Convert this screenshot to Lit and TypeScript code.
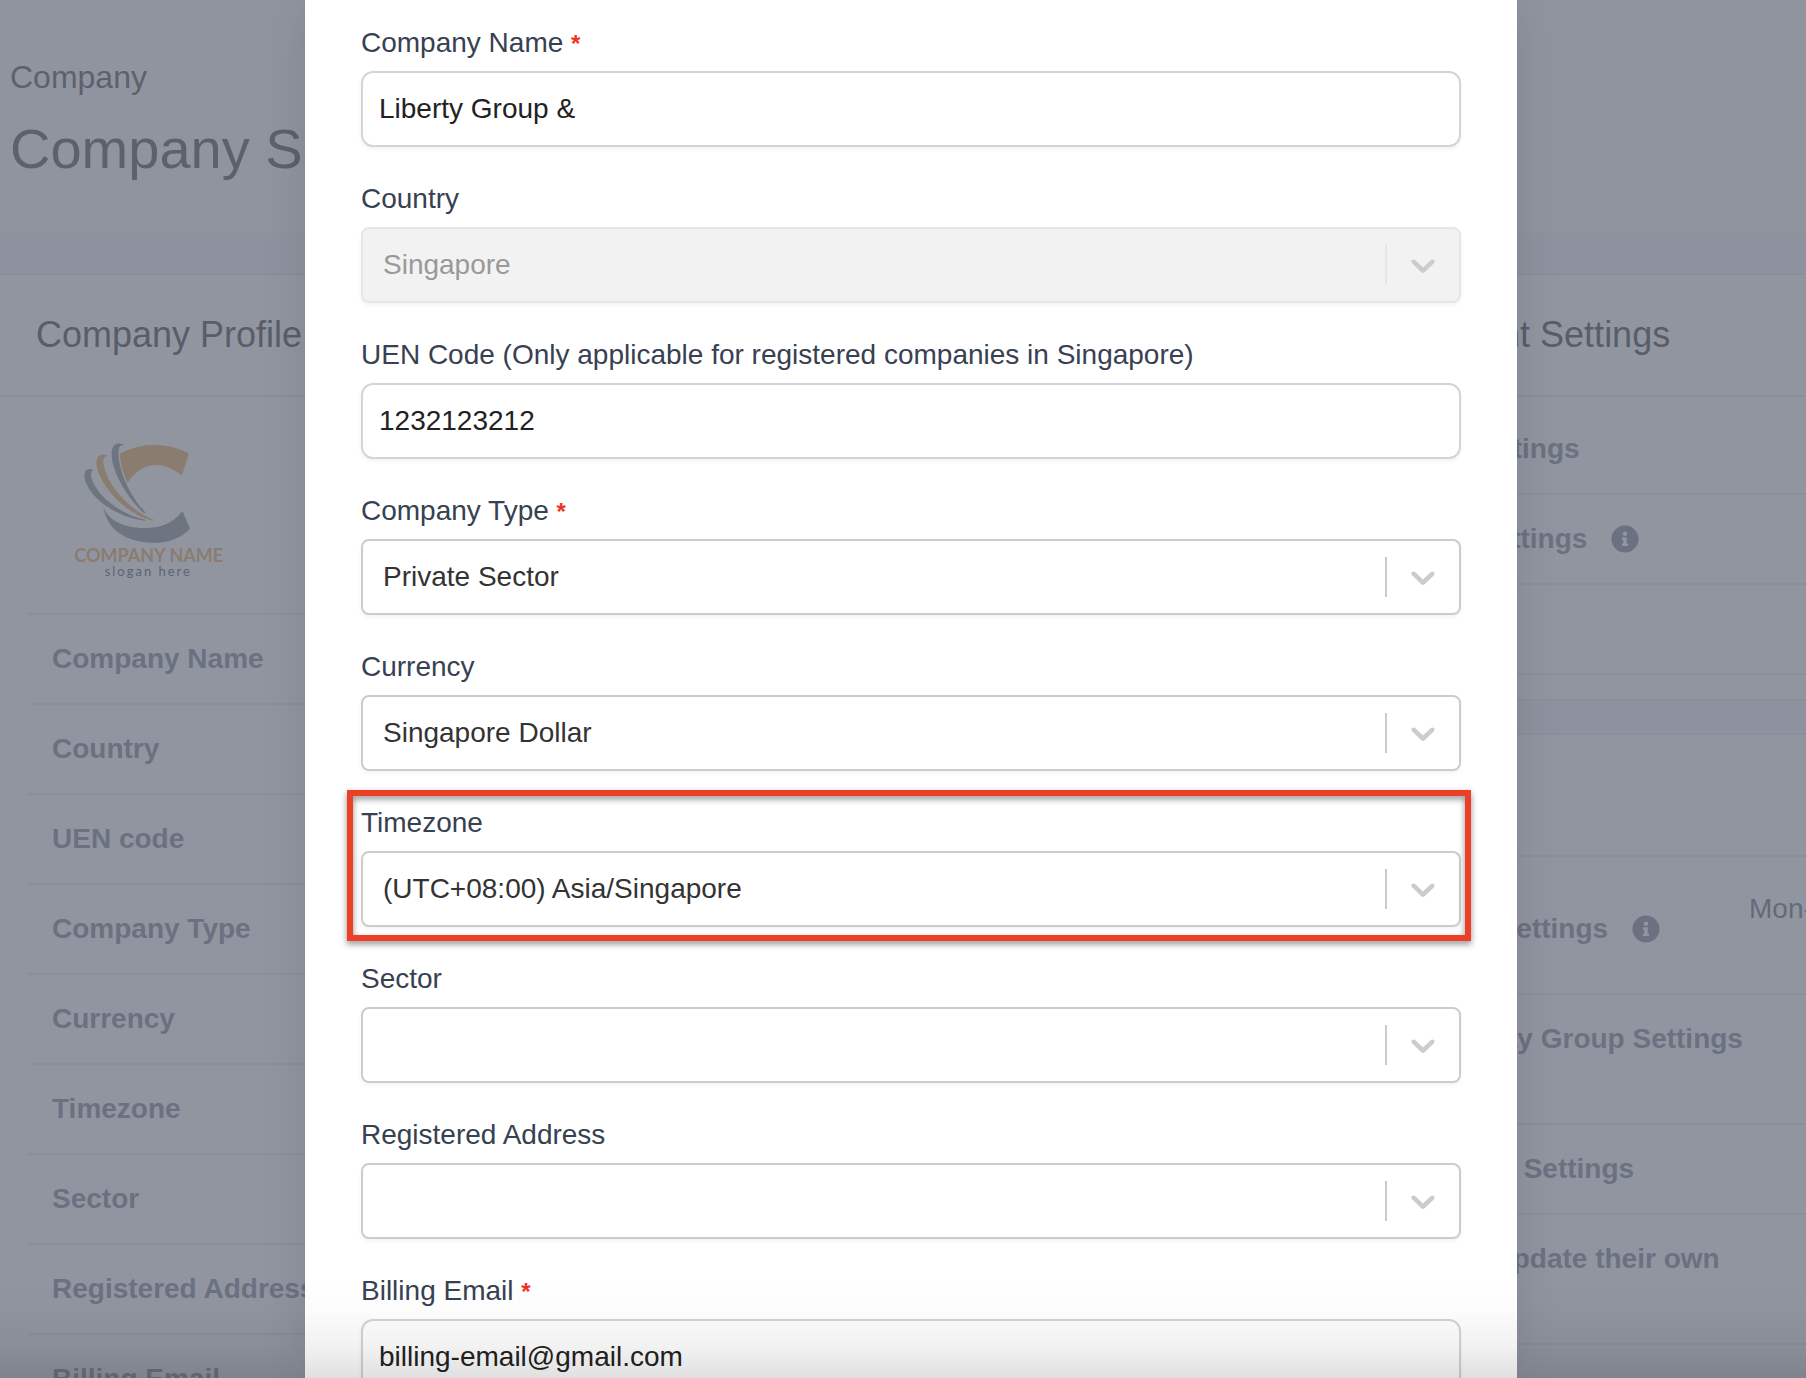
import { LitElement, html, css, nothing } from "lit";
import { customElement, property } from "lit/decorators.js";

interface Field {
  id: string;
  label: string;
  kind: "text" | "email" | "select";
  value: string;
  required?: boolean;
  disabled?: boolean;
  marked?: boolean;
}

interface Setting {
  label: string;
  info?: boolean;
  value?: string;
}

const FIELDS: Field[] = [
  { id: "company-name", label: "Company Name", kind: "text", value: "Liberty Group &", required: true },
  { id: "country", label: "Country", kind: "select", value: "Singapore", disabled: true },
  { id: "uen", label: "UEN Code (Only applicable for registered companies in Singapore)", kind: "text", value: "1232123212" },
  { id: "company-type", label: "Company Type", kind: "select", value: "Private Sector", required: true },
  { id: "currency", label: "Currency", kind: "select", value: "Singapore Dollar" },
  { id: "timezone", label: "Timezone", kind: "select", value: "(UTC+08:00) Asia/Singapore", marked: true },
  { id: "sector", label: "Sector", kind: "select", value: "" },
  { id: "address", label: "Registered Address", kind: "select", value: "" },
  { id: "billing-email", label: "Billing Email", kind: "email", value: "billing-email@gmail.com", required: true },
];

const PROFILE: Setting[] = [
  "Company Name",
  "Country",
  "UEN code",
  "Company Type",
  "Currency",
  "Timezone",
  "Sector",
  "Registered Address",
  "Billing Email",
].map((label) => ({ label }));

const GENERAL: Setting[] = [
  { label: "Approval Settings" },
  { label: "Reminder Settings", info: true },
  { label: "" },
];

const WORK: Setting[] = [
  { label: "Work Week Settings", info: true, value: "Mon-Fri" },
  { label: "Public Holiday Group Settings Calendar" },
  { label: "Payroll Cycle Settings" },
  { label: "Employees update their own profile" },
  { label: "" },
];

@customElement("form-field")
class FormField extends LitElement {
  @property({ attribute: false }) field!: Field;

  static styles = css`
    :host {
      display: block;
      position: relative;
    }
    .label {
      display: block;
      margin-bottom: 8px;
      font-size: 28px;
      line-height: 40px;
      color: #374151;
    }
    .star {
      font-size: 24px;
      font-weight: 700;
      line-height: 1;
      color: #f0321e;
    }
    .input,
    .select {
      box-sizing: border-box;
      width: 100%;
      margin: 0;
      font: inherit;
      font-size: 28px;
      line-height: 40px;
      outline: none;
    }
    .input {
      display: block;
      height: 76px;
      padding: 0 16px;
      border: 2px solid #d1d5db;
      border-radius: 12px;
      background: #fff;
      color: #222;
      box-shadow: 0 2px 4px rgba(0, 0, 0, 0.05);
    }
    .control {
      display: grid;
      box-sizing: border-box;
      height: 76px;
      border: 2px solid #ccc;
      border-radius: 8px;
      background: #fff;
      box-shadow: 0 2px 4px rgba(0, 0, 0, 0.05);
    }
    .select {
      grid-area: 1 / 1;
      appearance: none;
      padding: 0 84px 0 20px;
      border: 0;
      background: transparent;
      color: #333;
      opacity: 1;
    }
    .indicators {
      grid-area: 1 / 1;
      justify-self: end;
      display: flex;
      align-items: center;
      color: #ccc;
      pointer-events: none;
    }
    .separator {
      width: 2px;
      height: 40px;
      background: #ccc;
    }
    .chevron {
      display: block;
      width: 40px;
      height: 40px;
      padding: 0 16px;
      fill: currentColor;
    }
    .disabled {
      border-color: #e6e6e6;
      background: #f2f2f2;
    }
    .disabled .select {
      color: #999;
    }
    .disabled .separator {
      background: #e6e6e6;
    }
    .mark {
      position: absolute;
      inset: -13px -10px -14px -14px;
      border: 6px solid #eb4026;
      filter: drop-shadow(0 3px 3px rgba(0, 0, 0, 0.45));
      pointer-events: none;
    }
  `;

  render() {
    const f = this.field;
    return html`
      <label class="label" for=${f.id}
        >${f.label}${f.required ? html` <span class="star">*</span>` : nothing}</label
      >
      ${f.kind === "select"
        ? html`<div class="control ${f.disabled ? "disabled" : ""}">
            <select class="select" id=${f.id} ?disabled=${f.disabled}>
              <option>${f.value}</option>
            </select>
            <div class="indicators">
              <span class="separator"></span>
              <svg class="chevron" viewBox="0 0 20 20" aria-hidden="true">
                <path
                  d="M4.516 7.548c0.436-0.446 1.043-0.481 1.576 0l3.908 3.747 3.908-3.747c0.533-0.481 1.141-0.446 1.574 0 0.436 0.445 0.408 1.197 0 1.615-0.406 0.418-4.695 4.502-4.695 4.502-0.217 0.223-0.502 0.335-0.787 0.335s-0.57-0.112-0.789-0.335c0 0-4.287-4.084-4.695-4.502s-0.436-1.17 0-1.615z"
                />
              </svg>
            </div>
          </div>`
        : html`<input class="input" id=${f.id} type=${f.kind} .value=${f.value} />`}
      ${f.marked ? html`<div class="mark"></div>` : nothing}
    `;
  }
}

@customElement("settings-card")
class SettingsCard extends LitElement {
  @property() heading = "";
  @property({ attribute: false }) rows: Setting[] = [];

  static styles = css`
    :host {
      display: block;
      border-top: 2px solid #e5e7eb;
      border-bottom: 2px solid #e5e7eb;
      background: #fff;
    }
    .heading {
      margin: 0;
      padding: 36px;
      border-bottom: 2px solid #e5e7eb;
      font-size: 36px;
      line-height: 48px;
      font-weight: 400;
      color: #222;
      white-space: nowrap;
    }
    .body {
      padding: 8px 0 24px 28px;
    }
    .list {
      margin: 0;
    }
    .row {
      display: flex;
      align-items: center;
      min-height: 40px;
      padding: 24px 0 24px 24px;
      border-bottom: 2px solid #e5e7eb;
      font-size: 28px;
      line-height: 40px;
      color: #6b7280;
    }
    .term {
      display: flex;
      align-items: center;
      gap: 24px;
      flex: 0 0 409px;
      font-weight: 700;
    }
    .info {
      width: 28px;
      height: 28px;
      fill: currentColor;
    }
    .value {
      margin: 0;
      padding-bottom: 40px;
      color: #4b5563;
      white-space: nowrap;
    }
  `;

  render() {
    return html`
      <h2 class="heading">${this.heading}</h2>
      <div class="body">
        <slot></slot>
        <dl class="list">
          ${this.rows.map(
            (r) => html`<div class="row">
              <dt class="term">
                <span>${r.label}</span>
                ${r.info
                  ? html`<svg class="info" viewBox="0 0 512 512" aria-hidden="true">
                      <path
                        d="M256 8C119 8 8 119 8 256s111 248 248 248 248-111 248-248S393 8 256 8zm0 110c23.200 0 42 18.800 42 42s-18.800 42-42 42-42-18.800-42-42 18.800-42 42-42zm56 254c0 6.600-5.400 12-12 12h-88c-6.600 0-12-5.400-12-12v-24c0-6.600 5.400-12 12-12h12v-64h-12c-6.600 0-12-5.400-12-12v-24c0-6.600 5.400-12 12-12h64c6.600 0 12 5.400 12 12v100h12c6.600 0 12 5.400 12 12v24z"
                      />
                    </svg>`
                  : nothing}
              </dt>
              ${r.value ? html`<dd class="value">${r.value}</dd>` : nothing}
            </div>`
          )}
        </dl>
      </div>
    `;
  }
}

@customElement("app-root")
class AppRoot extends LitElement {
  static styles = css`
    :host {
      display: block;
      font-family: "Liberation Sans", Arial, Helvetica, sans-serif;
    }
    .shell {
      position: relative;
      height: 100vh;
      overflow: hidden;
      background: #f3f4f6;
    }
    .masthead {
      padding: 57px 10px 48px;
      background: #f9fafb;
      color: #333;
    }
    .crumb {
      margin: 0 0 16px;
      font-size: 32px;
      line-height: 40px;
    }
    .title {
      margin: 0;
      font-size: 56px;
      line-height: 72px;
      font-weight: 400;
    }
    .cards {
      display: grid;
      grid-template-columns: minmax(0, 1fr) 518px;
      align-items: start;
      gap: 32px;
      margin-top: 40px;
    }
    .stack {
      display: grid;
      gap: 32px;
    }
    .brand {
      padding: 35px 0 33px 45px;
      border-bottom: 2px solid #e5e7eb;
    }
    .logo {
      display: block;
      width: 154px;
      height: 140px;
    }
    .orange {
      fill: #ec9a40;
    }
    .slate {
      fill: #748084;
    }
    .brand-name {
      font: 700 54px Lato, sans-serif;
      fill: #ec9a40;
    }
    .brand-slogan {
      font: 400 39px Lato, sans-serif;
      letter-spacing: 6px;
      fill: #30363e;
    }
    .scrim {
      position: absolute;
      inset: 0;
      background: rgba(107, 114, 128, 0.75);
    }
    .stage {
      position: absolute;
      inset: 0;
      display: flex;
      justify-content: center;
      padding-left: 16px;
    }
    .dialog {
      box-sizing: border-box;
      width: 100%;
      max-width: 1212px;
      padding: 23px 56px 48px;
      background: #fff;
      box-shadow: 0 0 48px -8px rgba(0, 0, 0, 0.14);
    }
    .form {
      display: grid;
      gap: 32px;
    }
    .fade {
      position: absolute;
      inset: auto 0 0;
      height: 100px;
      background: linear-gradient(
        rgba(0, 0, 0, 0),
        rgba(0, 0, 0, 0.01) 30%,
        rgba(0, 0, 0, 0.05) 68%,
        rgba(0, 0, 0, 0.12)
      );
      pointer-events: none;
    }
  `;

  private logo() {
    return html`<svg class="logo" viewBox="40 60 462 420" role="img" aria-label="Company logo">
      <path
        class="orange"
        d="M180 101Q230 74 288 74Q340 75 384 99Q388 102 386 107L368 162Q366 167 361 163Q325 135 289 135Q238 137 204 188Q183 145 180 101Z"
      />
      <path
        class="slate"
        d="M130 260Q154 322 256 325Q330 323 365 277Q369 272 371 279L390 323Q391 327 387 331Q345 369 280 369Q150 364 130 260Z"
      />
      <path
        class="slate"
        d="M195 76Q181 72 177 88C172 130 198 214 257 277L254 281C199 229 154 152 156 98Q158 67 182 71Q190 72 195 76Z"
      />
      <path
        class="orange"
        d="M145 107Q132 107 131 124C134 180 195 264 283 300L278 302C190 280 112 185 110 127Q112 100 134 104Q141 105 145 107Z"
      />
      <path
        class="slate"
        d="M101 149Q92 154 94 169C106 223 176 282 260 300L254 302C155 288 80 223 74 169Q74 144 93 147Z"
      />
      <text class="brand-name" x="44" y="425">COMPANY NAME</text>
      <text class="brand-slogan" x="135" y="467">slogan here</text>
    </svg>`;
  }

  render() {
    return html`
      <div class="shell">
        <header class="masthead">
          <p class="crumb">Company</p>
          <h1 class="title">Company Settings</h1>
        </header>
        <main class="cards">
          <settings-card heading="Company Profile" .rows=${PROFILE}>
            <div class="brand">${this.logo()}</div>
          </settings-card>
          <div class="stack">
            <settings-card heading="Procurement Settings" .rows=${GENERAL}></settings-card>
            <settings-card heading="Work" .rows=${WORK}></settings-card>
          </div>
        </main>
        <div class="scrim"></div>
        <div class="stage">
          <section class="dialog" role="dialog" aria-label="Company Profile">
            <form class="form">
              ${FIELDS.map((f) => html`<form-field .field=${f}></form-field>`)}
            </form>
          </section>
        </div>
        <div class="fade"></div>
      </div>
    `;
  }
}
